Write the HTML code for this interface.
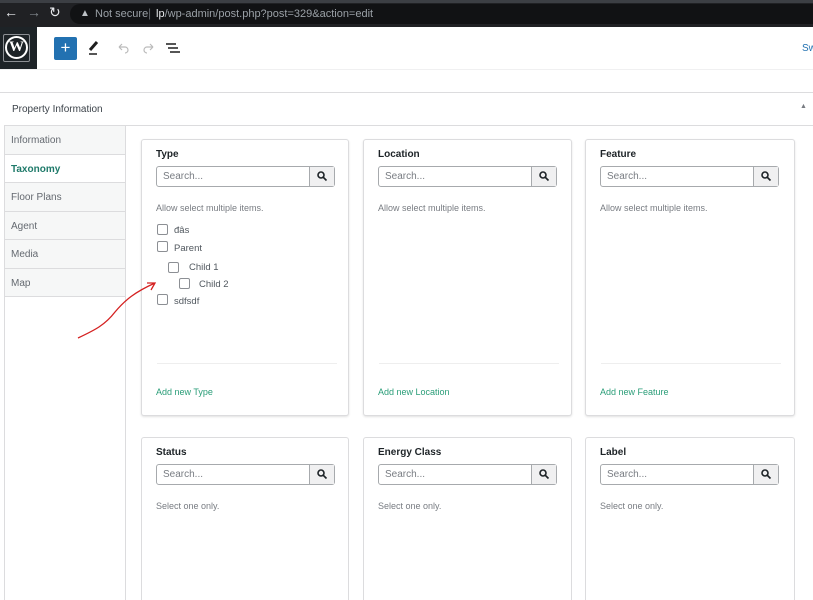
<!DOCTYPE html>
<html><head><style>
*{box-sizing:border-box;margin:0;padding:0}
html,body{width:813px;height:600px;overflow:hidden}
body{background:#fff;font-family:"Liberation Sans",sans-serif;position:relative;color:#3c434a}
.abs{position:absolute}
.bar{left:0;top:0;width:813px;height:27px;background:#202124;border-top:3px solid #3c3f44}
.url{left:70px;top:4px;width:743px;height:20px;border-radius:10px 0 0 10px;background:#111214}
.card{position:absolute;background:#fff;border:1px solid #dcdcde;border-radius:3px;box-shadow:0 1px 2px rgba(0,0,0,.12)}
.card.b{border-bottom:none;border-radius:3px 3px 0 0;box-shadow:none}
.card h4{position:absolute;left:14px;top:9px;font-size:10px;font-weight:bold;color:#1d2327}
.srch{position:absolute;left:14px;top:26px;width:179px;height:21px;border:1px solid #a7aaad;border-radius:3px;background:#fff}
.srch span{position:absolute;left:6px;top:4px;font-size:10px;color:#787c82}
.srch i{position:absolute;right:0;top:0;width:25px;height:19px;border-left:1px solid #a7aaad;background:#f0f0f1}
.note{position:absolute;left:14px;top:63px;font-size:9px;color:#787c82}
.add{position:absolute;left:14px;font-size:9px;color:#2a9d78}
.tabs{position:absolute;left:4px;top:126px;width:122px}
.tab{height:28.5px;background:#f6f7f7;border-bottom:1px solid #dcdcde;font-size:10px;color:#646970;padding:9px 0 0 7px}
.cb{position:absolute;width:11px;height:11px;border:1px solid #8c8f94;border-radius:2px;background:#fff}
.lb{position:absolute;font-size:9.5px;color:#50575e}
</style></head><body>
<div class="abs bar"></div>
<div class="abs url"></div>
<span class="abs" style="left:4px;top:4px;color:#e8eaed;font-size:14px">←</span>
<span class="abs" style="left:27px;top:4px;color:#80868b;font-size:14px">→</span>
<span class="abs" style="left:49px;top:4px;color:#e8eaed;font-size:14px">↻</span>
<span class="abs" style="left:80px;top:8px;color:#bdc1c6;font-size:10px">▲</span>
<span class="abs" style="left:95px;top:8px;color:#9aa0a6;font-size:11px">Not secure</span>
<span class="abs" style="left:148px;top:6px;color:#5f6368;font-size:12px">|</span>
<span class="abs" style="left:156px;top:8px;color:#9aa0a6;font-size:11px"><b style="color:#e8eaed;font-weight:normal">lp</b>/wp-admin/post.php?post=329&amp;action=edit</span>
<div class="abs" style="left:0;top:27px;width:37px;height:43px;background:#1d2327"></div>
<div class="abs" style="left:3px;top:34px;width:27px;height:28px;border:1px solid #8c8f94;border-radius:2px"></div>
<div class="abs" style="left:5px;top:36px;width:23px;height:23px;border-radius:50%;border:2px solid #fff;color:#fff;font:bold 15px 'Liberation Serif',serif;text-align:center;line-height:19px">W</div>
<div class="abs" style="left:54px;top:37px;width:23px;height:23px;background:#2271b1;border-radius:2px;color:#fff;text-align:center;font-size:17px;line-height:22px">+</div>
<svg class="abs" style="left:86px;top:38px" width="100" height="20"><path d="M4 12 L11 4" stroke="#1e1e1e" stroke-width="3"/><path d="M3 16h8" stroke="#1e1e1e" stroke-width="1.5"/><path d="M33 9h6a3 3 0 0 1 0 6M33 9l3-3M33 9l3 3" stroke="#bbb" fill="none" stroke-width="1.2"/><path d="M67 9h-6a3 3 0 0 0 0 6M67 9l-3-3M67 9l-3 3" stroke="#bbb" fill="none" stroke-width="1.2"/><path d="M80 6h10M82 10h10M84 14h10" stroke="#1e1e1e" stroke-width="1.5"/></svg>
<span class="abs" style="left:802px;top:43px;font-size:10px;color:#2271b1">Sw</span>
<div class="abs" style="left:0;top:69px;width:813px;height:1px;background:#f0f0f1"></div>
<div class="abs" style="left:0;top:92px;width:813px;height:1px;background:#dcdcde"></div>
<span class="abs" style="left:12px;top:104px;font-size:10px;color:#3c434a">Property Information</span>
<span class="abs" style="left:800px;top:103px;font-size:7px;color:#787c82">▲</span>
<div class="abs" style="left:4px;top:125px;width:809px;height:1px;background:#dcdcde"></div>
<div class="tabs">
<div class="tab">Information</div>
<div class="tab" style="background:#fff;color:#1f7a6a;font-weight:bold">Taxonomy</div>
<div class="tab">Floor Plans</div>
<div class="tab">Agent</div>
<div class="tab">Media</div>
<div class="tab">Map</div>
</div>
<div class="abs" style="left:4px;top:125px;width:1px;height:475px;background:#dcdcde"></div>
<div class="abs" style="left:125px;top:125px;width:1px;height:475px;background:#dcdcde"></div>

<div class="card" style="left:141px;top:139px;width:208px;height:277px"><h4>Type</h4><div class="srch"><span>Search...</span><i></i></div><div class="note">Allow select multiple items.</div>
<div class="cb" style="left:15px;top:84px"></div><div class="lb" style="left:32px;top:85px">đâs</div>
<div class="cb" style="left:15px;top:101px"></div><div class="lb" style="left:32px;top:103px">Parent</div>
<div class="cb" style="left:26px;top:122px"></div><div class="lb" style="left:47px;top:122px">Child 1</div>
<div class="cb" style="left:37px;top:138px"></div><div class="lb" style="left:57px;top:139px">Child 2</div>
<div class="cb" style="left:15px;top:154px"></div><div class="lb" style="left:32px;top:156px">sdfsdf</div>
<div class="abs" style="left:15px;top:223px;width:180px;height:1px;background:#eee"></div><div class="add" style="top:247px">Add new Type</div></div>
<div class="card" style="left:363px;top:139px;width:209px;height:277px"><h4>Location</h4><div class="srch"><span>Search...</span><i></i></div><div class="note">Allow select multiple items.</div><div class="abs" style="left:15px;top:223px;width:180px;height:1px;background:#eee"></div><div class="add" style="top:247px">Add new Location</div></div>
<div class="card" style="left:585px;top:139px;width:210px;height:277px"><h4>Feature</h4><div class="srch"><span>Search...</span><i></i></div><div class="note">Allow select multiple items.</div><div class="abs" style="left:15px;top:223px;width:180px;height:1px;background:#eee"></div><div class="add" style="top:247px">Add new Feature</div></div>
<div class="card b" style="left:141px;top:437px;width:208px;height:163px"><h4>Status</h4><div class="srch"><span>Search...</span><i></i></div><div class="note">Select one only.</div></div>
<div class="card b" style="left:363px;top:437px;width:209px;height:163px"><h4>Energy Class</h4><div class="srch"><span>Search...</span><i></i></div><div class="note">Select one only.</div></div>
<div class="card b" style="left:585px;top:437px;width:210px;height:163px"><h4>Label</h4><div class="srch"><span>Search...</span><i></i></div><div class="note">Select one only.</div></div>
<svg class="abs" style="left:0;top:0" width="813" height="600" fill="none">
<g stroke="#1d2327" stroke-width="1.6"><circle cx="321" cy="175" r="3"/><path d="M323 177l3.5 3.5"/><circle cx="543" cy="175" r="3"/><path d="M545 177l3.5 3.5"/><circle cx="765" cy="175" r="3"/><path d="M767 177l3.5 3.5"/><circle cx="321" cy="473" r="3"/><path d="M323 475l3.5 3.5"/><circle cx="543" cy="473" r="3"/><path d="M545 475l3.5 3.5"/><circle cx="765" cy="473" r="3"/><path d="M767 475l3.5 3.5"/></g>
<path d="M78 338 C95 330 105 325 115 312 C125 300 135 292 155 283 M147 283 L155 283 L151 290" stroke="#d42020" stroke-width="1.3"/>
</svg>
</body></html>
